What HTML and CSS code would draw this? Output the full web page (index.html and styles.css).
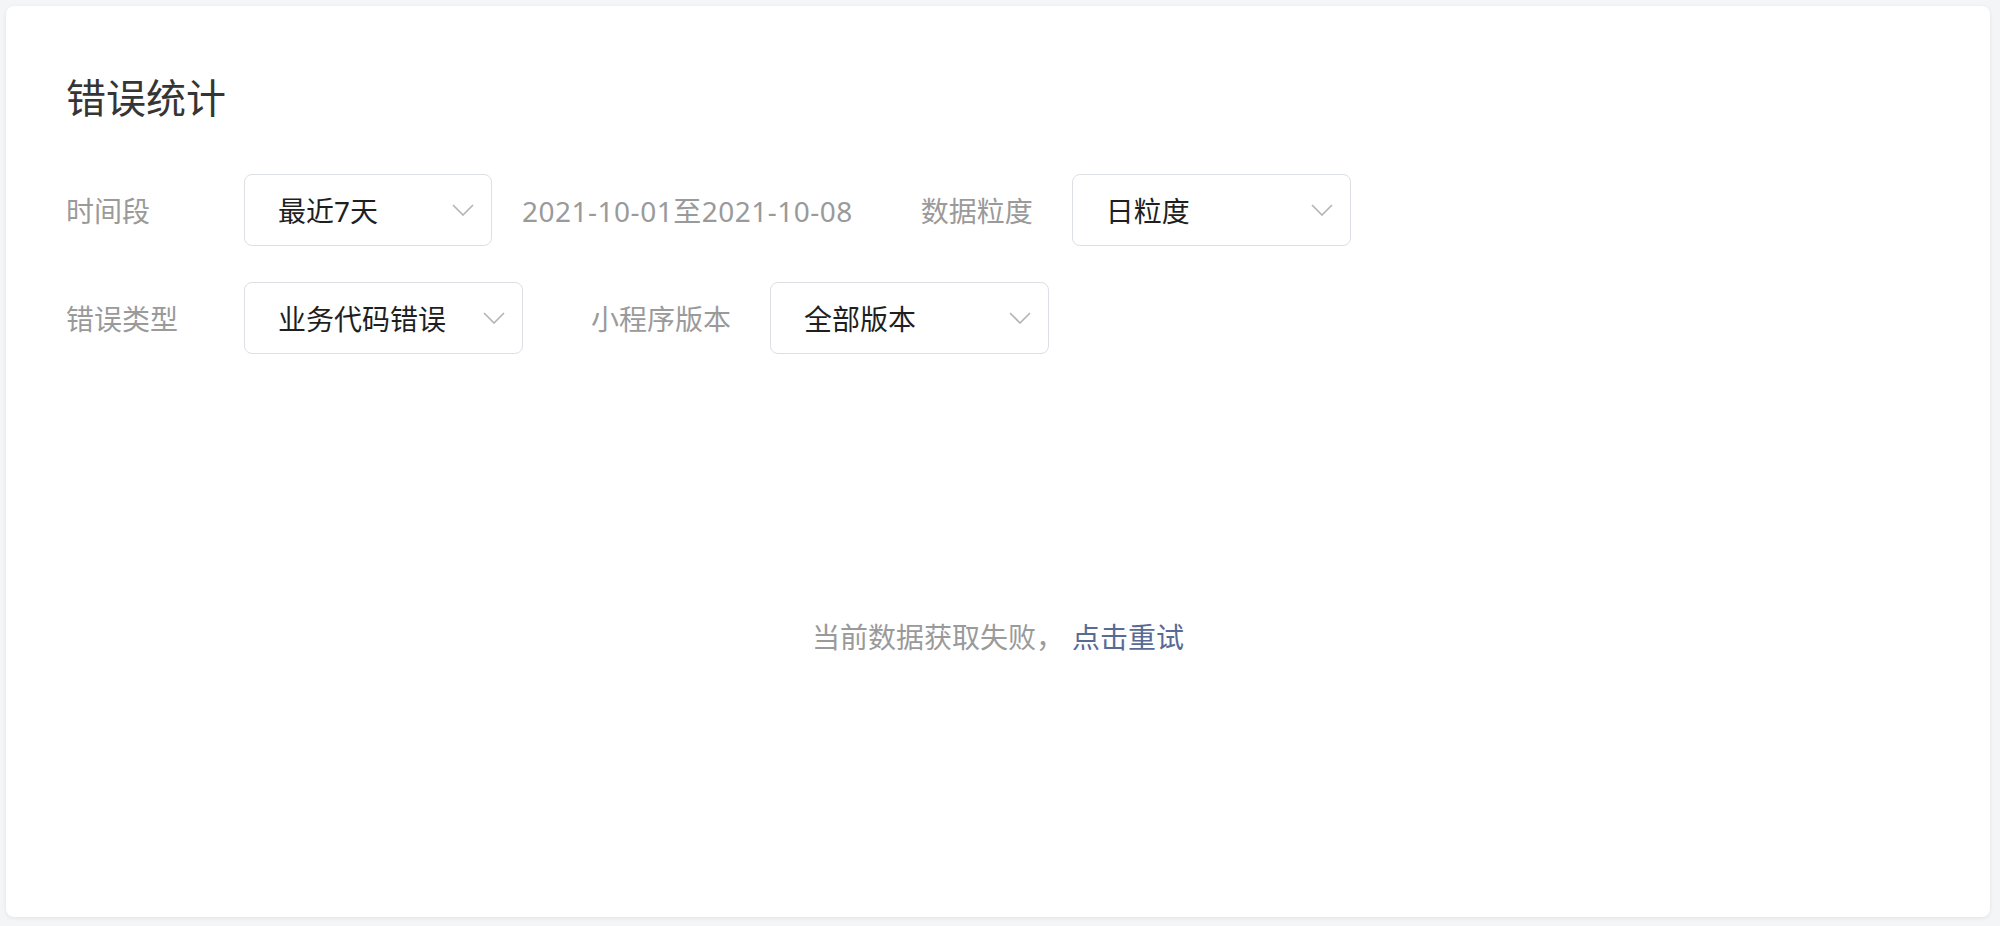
FILE: index.html
```html
<!DOCTYPE html>
<html lang="zh-CN">
<head>
<meta charset="utf-8">
<title>错误统计</title>
<link rel="stylesheet" href="styles.css">
</head>
<body>
<div class="card">
  <h1 class="title">错误统计</h1>
  <div class="filters">
    <div class="row">
      <span class="label label-first">时间段</span>
      <div class="select select-sm">
        <span class="select-value">最近7天</span>
        <svg class="chevron" viewBox="0 0 22 12" width="22" height="12"><path d="M1 1 L11 11 L21 1" fill="none" stroke="#b3b3b3" stroke-width="1.6"/></svg>
      </div>
      <span class="date-range">2021-10-01至2021-10-08</span>
      <span class="label label-next">数据粒度</span>
      <div class="select">
        <span class="select-value">日粒度</span>
        <svg class="chevron" viewBox="0 0 22 12" width="22" height="12"><path d="M1 1 L11 11 L21 1" fill="none" stroke="#b3b3b3" stroke-width="1.6"/></svg>
      </div>
    </div>
    <div class="row">
      <span class="label label-first">错误类型</span>
      <div class="select">
        <span class="select-value">业务代码错误</span>
        <svg class="chevron" viewBox="0 0 22 12" width="22" height="12"><path d="M1 1 L11 11 L21 1" fill="none" stroke="#b3b3b3" stroke-width="1.6"/></svg>
      </div>
      <span class="label label-next">小程序版本</span>
      <div class="select">
        <span class="select-value">全部版本</span>
        <svg class="chevron" viewBox="0 0 22 12" width="22" height="12"><path d="M1 1 L11 11 L21 1" fill="none" stroke="#b3b3b3" stroke-width="1.6"/></svg>
      </div>
    </div>
  </div>
  <div class="empty">
    <span class="empty-text">当前数据获取失败，</span><a class="retry" href="#">点击重试</a>
  </div>
</div>
</body>
</html>
```

FILE: styles.css
```css
html, body {
  margin: 0;
  padding: 0;
  height: 100%;
}
body {
  background: #f4f5f7;
  font-family: "Noto Sans", "Noto Sans CJK SC", sans-serif;
  padding: 6px 10px 9px 6px;
  box-sizing: border-box;
}
.card {
  background: #fff;
  border-radius: 8px;
  box-shadow: 0 1px 4px rgba(0, 0, 0, 0.08);
  height: 911px;
  box-sizing: border-box;
  padding: 64px 60px 0 60px;
  display: flex;
  flex-direction: column;
}
.title {
  margin: 0;
  font-size: 40px;
  font-weight: 400;
  line-height: 56px;
  color: #353535;
}
.filters {
  margin-top: 48px;
  display: flex;
  flex-direction: column;
  gap: 36px;
}
.row {
  display: flex;
  align-items: center;
  height: 72px;
}
.label {
  font-size: 28px;
  color: #9a9a9a;
  margin-right: 39px;
  white-space: nowrap;
}
.label-first {
  width: 138px;
  margin-right: 40px;
}
.label-next {
  margin-left: 68px;
}
.select {
  width: 279px;
  height: 72px;
  box-sizing: border-box;
  border: 1.5px solid #dcdfe3;
  border-radius: 8px;
  display: flex;
  align-items: center;
  justify-content: space-between;
  padding: 0 17px 0 33px;
}
.select-sm {
  width: 248px;
}
.select-value {
  font-size: 28px;
  color: #1f1f1f;
}
.chevron {
  display: block;
}
.date-range {
  margin-left: 30px;
  font-size: 28px;
  letter-spacing: 0.5px;
  color: #9a9a9a;
  white-space: nowrap;
}
.empty {
  flex: 1;
  display: flex;
  align-items: center;
  justify-content: center;
  font-size: 28px;
}
.empty-text {
  color: #9a9a9a;
}
.retry {
  color: #576b95;
  text-decoration: none;
  margin-left: 8px;
}
```
